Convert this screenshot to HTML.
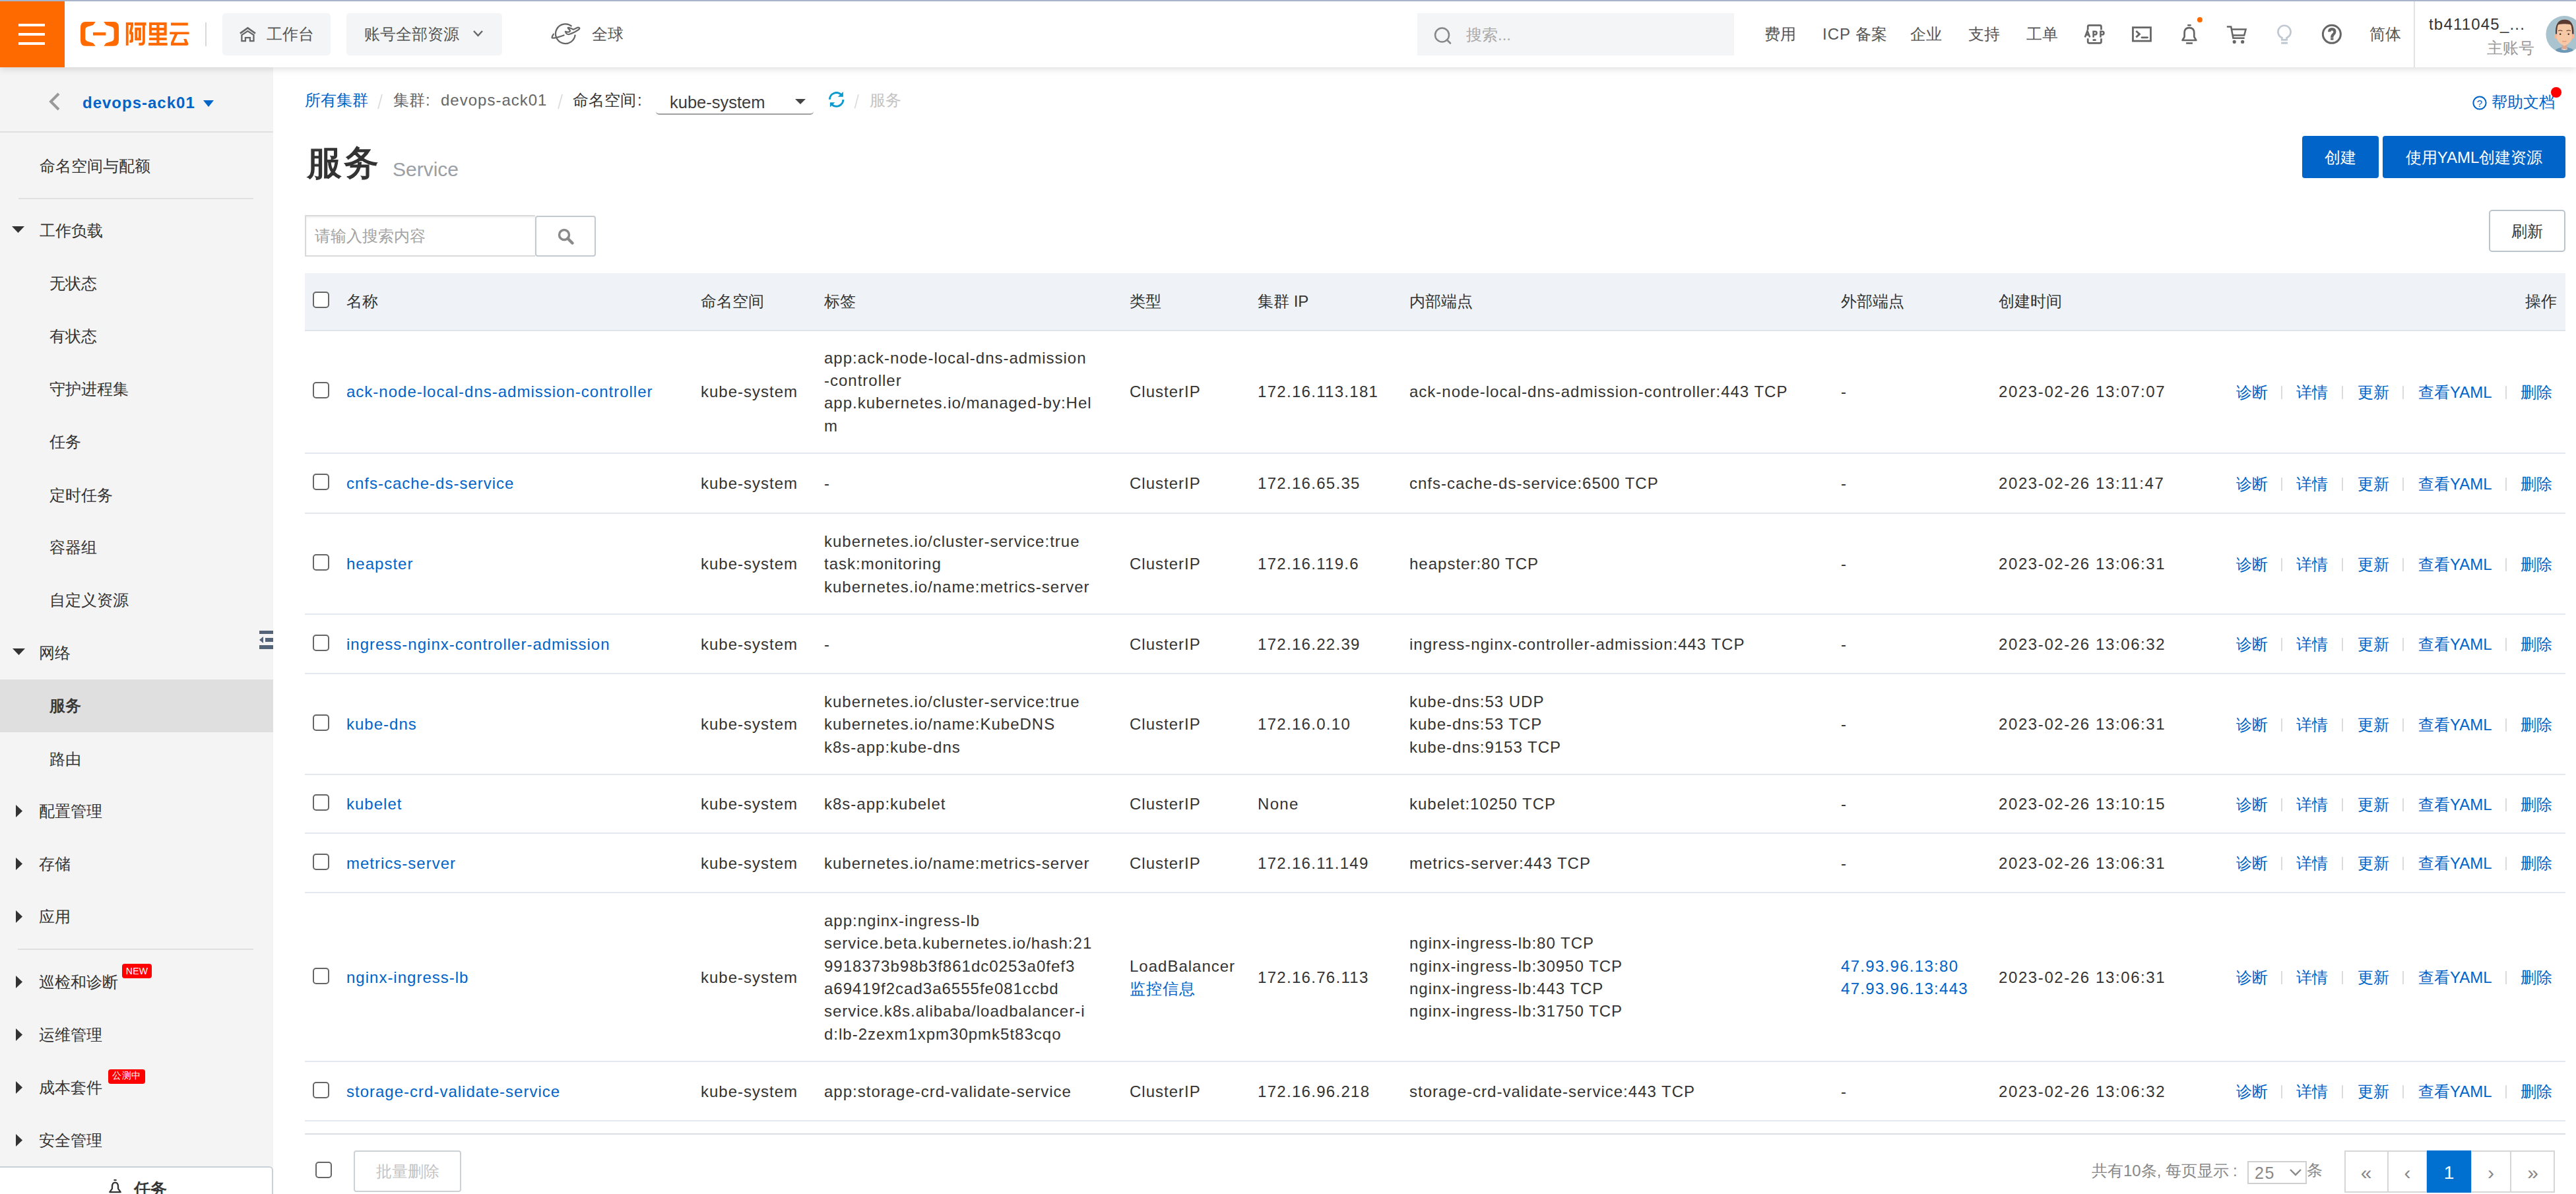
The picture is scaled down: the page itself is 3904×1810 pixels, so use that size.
<!DOCTYPE html><html><head><meta charset="utf-8"><style>
*{box-sizing:border-box}
html,body{margin:0;padding:0}
body{width:3904px;height:1810px;overflow:hidden;position:relative;background:#fff;font-family:"Liberation Sans",sans-serif;font-size:24px;color:#333}
.ab{position:absolute}
.t{position:absolute;white-space:nowrap;line-height:34px;height:34px}
.l{letter-spacing:1px}
.n{letter-spacing:1.3px}
.d{letter-spacing:1.6px}
.lk{color:#0064c8}
.cb{position:absolute;width:25px;height:25px;border:2px solid #666;border-radius:5px;background:#fff}
.sep{position:absolute;width:2px;height:20px;background:#dcdcdc}
svg{position:absolute;overflow:visible}
</style></head><body><div class="ab" style="left:0px;top:102px;width:414px;height:1708px;background:#f4f4f4"></div>
<svg style="left:72px;top:140px" width="22" height="28" viewBox="0 0 22 28"><path d="M17 2 L5 14 L17 26" fill="none" stroke="#999" stroke-width="4"/></svg>
<div class="t " style="left:125px;top:139px;font-weight:bold;color:#0064c8;letter-spacing:1px">devops-ack01</div>
<svg style="left:308px;top:152px" width="16" height="10" viewBox="0 0 16 10"><path d="M0 0 L16 0 L8 10 Z" fill="#0064c8"/></svg>
<div class="ab" style="left:0px;top:199px;width:414px;height:2px;background:#e0e0e0"></div>
<div class="t " style="left:60px;top:235px;">命名空间与配额</div>
<div class="ab" style="left:28px;top:300px;width:356px;height:2px;background:#e0e0e0"></div>
<svg style="left:18px;top:343px" width="19" height="10" viewBox="0 0 19 10"><path d="M0 0 L19 0 L9.5 10 Z" fill="#333"/></svg>
<div class="t " style="left:60px;top:333px;">工作负载</div>
<div class="t " style="left:75px;top:413px;">无状态</div>
<div class="t " style="left:75px;top:493px;">有状态</div>
<div class="t " style="left:75px;top:573px;">守护进程集</div>
<div class="t " style="left:75px;top:653px;">任务</div>
<div class="t " style="left:75px;top:734px;">定时任务</div>
<div class="t " style="left:75px;top:813px;">容器组</div>
<div class="t " style="left:75px;top:893px;">自定义资源</div>
<svg style="left:19px;top:983px" width="19" height="10" viewBox="0 0 19 10"><path d="M0 0 L19 0 L9.5 10 Z" fill="#333"/></svg>
<div class="t " style="left:59px;top:973px;">网络</div>
<div class="ab" style="left:0px;top:1030px;width:414px;height:80px;background:#dfdfdf"></div>
<div class="t " style="left:75px;top:1053px;-webkit-text-stroke:0.7px #333">服务</div>
<div class="t " style="left:75px;top:1134px;">路由</div>
<svg style="left:24px;top:1220px" width="10" height="19" viewBox="0 0 10 19"><path d="M0 0 L10 9.5 L0 19 Z" fill="#333"/></svg>
<div class="t " style="left:59px;top:1213px;">配置管理</div>
<svg style="left:24px;top:1300px" width="10" height="19" viewBox="0 0 10 19"><path d="M0 0 L10 9.5 L0 19 Z" fill="#333"/></svg>
<div class="t " style="left:59px;top:1293px;">存储</div>
<svg style="left:24px;top:1380px" width="10" height="19" viewBox="0 0 10 19"><path d="M0 0 L10 9.5 L0 19 Z" fill="#333"/></svg>
<div class="t " style="left:59px;top:1373px;">应用</div>
<div class="ab" style="left:27px;top:1438px;width:357px;height:2px;background:#e0e0e0"></div>
<svg style="left:24px;top:1479px" width="10" height="19" viewBox="0 0 10 19"><path d="M0 0 L10 9.5 L0 19 Z" fill="#333"/></svg>
<div class="t " style="left:59px;top:1472px;">巡检和诊断</div>
<svg style="left:24px;top:1558.5px" width="10" height="19" viewBox="0 0 10 19"><path d="M0 0 L10 9.5 L0 19 Z" fill="#333"/></svg>
<div class="t " style="left:59px;top:1551.5px;">运维管理</div>
<svg style="left:24px;top:1638.5px" width="10" height="19" viewBox="0 0 10 19"><path d="M0 0 L10 9.5 L0 19 Z" fill="#333"/></svg>
<div class="t " style="left:59px;top:1631.5px;">成本套件</div>
<svg style="left:24px;top:1719px" width="10" height="19" viewBox="0 0 10 19"><path d="M0 0 L10 9.5 L0 19 Z" fill="#333"/></svg>
<div class="t " style="left:59px;top:1712px;">安全管理</div>
<div class="ab" style="left:185px;top:1461px;width:45px;height:22px;background:#f00;border-radius:4px"></div>
<div class="ab" style="left:185px;top:1461px;width:45px;height:22px;line-height:22px;text-align:center;color:#fff;font-size:14px;letter-spacing:0.3px">NEW</div>
<div class="ab" style="left:164px;top:1621px;width:56px;height:22px;background:#f00;border-radius:4px"></div>
<div class="ab" style="left:164px;top:1620px;width:56px;height:22px;line-height:22px;text-align:center;color:#fff;font-size:13.5px;letter-spacing:0.5px">公测中</div>
<svg style="left:393px;top:956px" width="21" height="28" viewBox="0 0 21 28"><rect x="0" y="0" width="21" height="5" fill="#546478"/><rect x="9" y="11" width="12" height="6" fill="#546478"/><rect x="0" y="22" width="21" height="6" fill="#546478"/><path d="M6 9 L6 19 L0 14 Z" fill="#546478"/></svg>
<div class="ab" style="left:0px;top:1768px;width:414px;height:62px;background:#fff;border-top:2px solid #c9d0d8;border-right:2px solid #c9d0d8;border-top-right-radius:6px"></div>
<svg style="left:0px;top:1680px" width="450" height="130" viewBox="0 0 2576 744" preserveAspectRatio="none"><rect x="987" y="617" width="24" height="12" fill="#333"/><path d="M952,728 L973,698 L973,682 Q973,645 999,645 Q1025,645 1025,682 L1025,698 L1046,728 Z" fill="none" stroke="#333" stroke-width="13" stroke-linejoin="round"/></svg>
<div class="t " style="left:203px;top:1785px;-webkit-text-stroke:0.8px #333;font-size:25px">任务</div>
<div class="t " style="left:462px;top:135px;color:#0064c8">所有集群</div>
<svg style="left:570px;top:140px" width="12" height="28" viewBox="0 0 12 28"><path d="M3 25 L9 3" stroke="#dcdcdc" stroke-width="1.8"/></svg>
<div class="t " style="left:596px;top:135px;color:#666">集群</div>
<div class="t " style="left:645px;top:135px;color:#666">:</div>
<div class="t " style="left:668px;top:135px;color:#666;letter-spacing:1px">devops-ack01</div>
<svg style="left:843px;top:140px" width="12" height="28" viewBox="0 0 12 28"><path d="M3 25 L9 3" stroke="#dcdcdc" stroke-width="1.8"/></svg>
<div class="t " style="left:868px;top:135px;color:#333">命名空间</div>
<div class="t " style="left:966px;top:135px;color:#333">:</div>
<div class="ab" style="left:994px;top:120px;width:239px;height:54px;border-bottom:2px solid #a0a0a0;border-radius:0 0 5px 5px"></div>
<div class="t " style="left:1015px;top:138px;font-size:25.5px;color:#3c3c3c">kube-system</div>
<svg style="left:1205px;top:150px" width="16" height="8" viewBox="0 0 16 8"><path d="M0 0 L16 0 L8 8 Z" fill="#444"/></svg>
<svg style="left:1245px;top:130px" width="130" height="45" viewBox="0 0 2576 892" preserveAspectRatio="none"><path d="M245,410 A205,205 0 0 1 585,262" fill="none" stroke="#0a9ad0" stroke-width="58"/><path d="M490,332 L652,180 L652,332 Z" fill="#0a9ad0"/><path d="M652,418 A205,205 0 0 1 312,568" fill="none" stroke="#0a9ad0" stroke-width="58"/><path d="M255,500 L405,500 L255,645 Z" fill="#0a9ad0"/><path d="M1000,680 L1110,262" stroke="#dcdcdc" stroke-width="34"/></svg>
<div class="t " style="left:1318px;top:135px;color:#c4c4c4">服务</div>
<svg style="left:3747px;top:145px" width="22" height="22" viewBox="0 0 22 22"><circle cx="11" cy="11" r="9.6" fill="none" stroke="#0064c8" stroke-width="2"/><text x="11" y="17" text-anchor="middle" font-size="15" fill="#0064c8" font-family="Liberation Sans">?</text></svg>
<div class="t " style="left:3776px;top:138px;color:#0064c8">帮助文档</div>
<div class="ab" style="left:3866px;top:132px;width:16px;height:16px;background:#f00;border-radius:50%"></div>
<div class="ab" style="left:465px;top:215px;line-height:64px;font-size:53px;letter-spacing:3px;-webkit-text-stroke:1.4px #333;color:#333;white-space:nowrap">服务</div>
<div class="ab" style="left:595px;top:238px;line-height:38px;font-size:30px;color:#9aa0a6;white-space:nowrap">Service</div>
<div class="ab" style="left:3489px;top:206px;width:116px;height:64px;background:#0064c8;border-radius:4px"></div>
<div class="t " style="left:3247px;width:600px;text-align:center;top:222px;color:#fff">创建</div>
<div class="ab" style="left:3611px;top:206px;width:277px;height:64px;background:#0064c8;border-radius:4px"></div>
<div class="t " style="left:3449.5px;width:600px;text-align:center;top:222px;color:#fff">使用YAML创建资源</div>
<div class="ab" style="left:462px;top:326px;width:349px;height:63px;border:2px solid #dadada;border-right:none;box-shadow:inset 0 2px 3px rgba(0,0,0,0.06)"></div>
<div class="t " style="left:477px;top:341px;color:#a3a3a3">请输入搜索内容</div>
<div class="ab" style="left:811px;top:327px;width:92px;height:62px;border:2px solid #c3cad2;border-radius:4px"></div>
<svg style="left:845px;top:346px" width="25" height="25" viewBox="0 0 25 25"><circle cx="10" cy="10" r="7.5" fill="none" stroke="#8a8a8a" stroke-width="3.5"/><path d="M15.5 15.5 L22.5 22.5" stroke="#8a8a8a" stroke-width="4.5" stroke-linecap="round"/></svg>
<div class="ab" style="left:3772px;top:318px;width:116px;height:64px;border:2px solid #bcc3cb;border-radius:5px"></div>
<div class="t " style="left:3530px;width:600px;text-align:center;top:334px;">刷新</div>
<div class="ab" style="left:462px;top:414px;width:3426px;height:86px;background:#eff3f8"></div>
<div class="ab" style="left:462px;top:500px;width:3426px;height:2px;background:#dfe4ea"></div>
<div class="cb" style="left:474px;top:442px"></div>
<div class="t " style="left:525px;top:440px;">名称</div>
<div class="t " style="left:1062px;top:440px;">命名空间</div>
<div class="t " style="left:1249px;top:440px;">标签</div>
<div class="t " style="left:1712px;top:440px;">类型</div>
<div class="t " style="left:1906px;top:440px;">集群 IP</div>
<div class="t " style="left:2136px;top:440px;">内部端点</div>
<div class="t " style="left:2790px;top:440px;">外部端点</div>
<div class="t " style="left:3029px;top:440px;">创建时间</div>
<div class="t " style="right:29px;top:440px;">操作</div>
<div class="cb" style="left:474px;top:579.0px"></div>
<div class="ab l" style="left:525px;top:577.4px;line-height:34.3px;white-space:nowrap"><span class="lk">ack-node-local-dns-admission-controller</span></div>
<div class="ab l" style="left:1062px;top:577.4px;line-height:34.3px;white-space:nowrap">kube-system</div>
<div class="ab l" style="left:1249px;top:525.9px;line-height:34.3px;white-space:nowrap">app:ack-node-local-dns-admission<br>-controller<br>app.kubernetes.io/managed-by:Hel<br>m</div>
<div class="ab l" style="left:1712px;top:577.4px;line-height:34.3px;white-space:nowrap">ClusterIP</div>
<div class="ab n" style="left:1906px;top:577.4px;line-height:34.3px;white-space:nowrap">172.16.113.181</div>
<div class="ab l" style="left:2136px;top:577.4px;line-height:34.3px;white-space:nowrap">ack-node-local-dns-admission-controller:443 TCP</div>
<div class="ab l" style="left:2790px;top:577.4px;line-height:34.3px;white-space:nowrap">-</div>
<div class="ab d" style="left:3029px;top:577.4px;line-height:34.3px;white-space:nowrap">2023-02-26 13:07:07</div>
<div class="t " style="left:3389px;top:577.5px;color:#0064c8">诊断</div>
<div class="t " style="left:3480px;top:577.5px;color:#0064c8">详情</div>
<div class="t " style="left:3573px;top:577.5px;color:#0064c8">更新</div>
<div class="t " style="left:3665px;top:577.5px;color:#0064c8">查看YAML</div>
<div class="t " style="left:3820px;top:577.5px;color:#0064c8">删除</div>
<div class="sep" style="left:3457px;top:584.5px"></div>
<div class="sep" style="left:3549px;top:584.5px"></div>
<div class="sep" style="left:3641px;top:584.5px"></div>
<div class="sep" style="left:3797px;top:584.5px"></div>
<div class="ab" style="left:462px;top:686px;width:3426px;height:2px;background:#e3e8ee"></div>
<div class="cb" style="left:474px;top:718.0px"></div>
<div class="ab l" style="left:525px;top:716.4px;line-height:34.3px;white-space:nowrap"><span class="lk">cnfs-cache-ds-service</span></div>
<div class="ab l" style="left:1062px;top:716.4px;line-height:34.3px;white-space:nowrap">kube-system</div>
<div class="ab l" style="left:1249px;top:716.4px;line-height:34.3px;white-space:nowrap">-</div>
<div class="ab l" style="left:1712px;top:716.4px;line-height:34.3px;white-space:nowrap">ClusterIP</div>
<div class="ab n" style="left:1906px;top:716.4px;line-height:34.3px;white-space:nowrap">172.16.65.35</div>
<div class="ab l" style="left:2136px;top:716.4px;line-height:34.3px;white-space:nowrap">cnfs-cache-ds-service:6500 TCP</div>
<div class="ab l" style="left:2790px;top:716.4px;line-height:34.3px;white-space:nowrap">-</div>
<div class="ab d" style="left:3029px;top:716.4px;line-height:34.3px;white-space:nowrap">2023-02-26 13:11:47</div>
<div class="t " style="left:3389px;top:716.5px;color:#0064c8">诊断</div>
<div class="t " style="left:3480px;top:716.5px;color:#0064c8">详情</div>
<div class="t " style="left:3573px;top:716.5px;color:#0064c8">更新</div>
<div class="t " style="left:3665px;top:716.5px;color:#0064c8">查看YAML</div>
<div class="t " style="left:3820px;top:716.5px;color:#0064c8">删除</div>
<div class="sep" style="left:3457px;top:723.5px"></div>
<div class="sep" style="left:3549px;top:723.5px"></div>
<div class="sep" style="left:3641px;top:723.5px"></div>
<div class="sep" style="left:3797px;top:723.5px"></div>
<div class="ab" style="left:462px;top:777px;width:3426px;height:2px;background:#e3e8ee"></div>
<div class="cb" style="left:474px;top:840.0px"></div>
<div class="ab l" style="left:525px;top:838.4px;line-height:34.3px;white-space:nowrap"><span class="lk">heapster</span></div>
<div class="ab l" style="left:1062px;top:838.4px;line-height:34.3px;white-space:nowrap">kube-system</div>
<div class="ab l" style="left:1249px;top:804.0px;line-height:34.3px;white-space:nowrap">kubernetes.io/cluster-service:true<br>task:monitoring<br>kubernetes.io/name:metrics-server</div>
<div class="ab l" style="left:1712px;top:838.4px;line-height:34.3px;white-space:nowrap">ClusterIP</div>
<div class="ab n" style="left:1906px;top:838.4px;line-height:34.3px;white-space:nowrap">172.16.119.6</div>
<div class="ab l" style="left:2136px;top:838.4px;line-height:34.3px;white-space:nowrap">heapster:80 TCP</div>
<div class="ab l" style="left:2790px;top:838.4px;line-height:34.3px;white-space:nowrap">-</div>
<div class="ab d" style="left:3029px;top:838.4px;line-height:34.3px;white-space:nowrap">2023-02-26 13:06:31</div>
<div class="t " style="left:3389px;top:838.5px;color:#0064c8">诊断</div>
<div class="t " style="left:3480px;top:838.5px;color:#0064c8">详情</div>
<div class="t " style="left:3573px;top:838.5px;color:#0064c8">更新</div>
<div class="t " style="left:3665px;top:838.5px;color:#0064c8">查看YAML</div>
<div class="t " style="left:3820px;top:838.5px;color:#0064c8">删除</div>
<div class="sep" style="left:3457px;top:845.5px"></div>
<div class="sep" style="left:3549px;top:845.5px"></div>
<div class="sep" style="left:3641px;top:845.5px"></div>
<div class="sep" style="left:3797px;top:845.5px"></div>
<div class="ab" style="left:462px;top:930px;width:3426px;height:2px;background:#e3e8ee"></div>
<div class="cb" style="left:474px;top:961.5px"></div>
<div class="ab l" style="left:525px;top:959.9px;line-height:34.3px;white-space:nowrap"><span class="lk">ingress-nginx-controller-admission</span></div>
<div class="ab l" style="left:1062px;top:959.9px;line-height:34.3px;white-space:nowrap">kube-system</div>
<div class="ab l" style="left:1249px;top:959.9px;line-height:34.3px;white-space:nowrap">-</div>
<div class="ab l" style="left:1712px;top:959.9px;line-height:34.3px;white-space:nowrap">ClusterIP</div>
<div class="ab n" style="left:1906px;top:959.9px;line-height:34.3px;white-space:nowrap">172.16.22.39</div>
<div class="ab l" style="left:2136px;top:959.9px;line-height:34.3px;white-space:nowrap">ingress-nginx-controller-admission:443 TCP</div>
<div class="ab l" style="left:2790px;top:959.9px;line-height:34.3px;white-space:nowrap">-</div>
<div class="ab d" style="left:3029px;top:959.9px;line-height:34.3px;white-space:nowrap">2023-02-26 13:06:32</div>
<div class="t " style="left:3389px;top:960.0px;color:#0064c8">诊断</div>
<div class="t " style="left:3480px;top:960.0px;color:#0064c8">详情</div>
<div class="t " style="left:3573px;top:960.0px;color:#0064c8">更新</div>
<div class="t " style="left:3665px;top:960.0px;color:#0064c8">查看YAML</div>
<div class="t " style="left:3820px;top:960.0px;color:#0064c8">删除</div>
<div class="sep" style="left:3457px;top:967.0px"></div>
<div class="sep" style="left:3549px;top:967.0px"></div>
<div class="sep" style="left:3641px;top:967.0px"></div>
<div class="sep" style="left:3797px;top:967.0px"></div>
<div class="ab" style="left:462px;top:1020px;width:3426px;height:2px;background:#e3e8ee"></div>
<div class="cb" style="left:474px;top:1083.0px"></div>
<div class="ab l" style="left:525px;top:1081.3px;line-height:34.3px;white-space:nowrap"><span class="lk">kube-dns</span></div>
<div class="ab l" style="left:1062px;top:1081.3px;line-height:34.3px;white-space:nowrap">kube-system</div>
<div class="ab l" style="left:1249px;top:1047.0px;line-height:34.3px;white-space:nowrap">kubernetes.io/cluster-service:true<br>kubernetes.io/name:KubeDNS<br>k8s-app:kube-dns</div>
<div class="ab l" style="left:1712px;top:1081.3px;line-height:34.3px;white-space:nowrap">ClusterIP</div>
<div class="ab n" style="left:1906px;top:1081.3px;line-height:34.3px;white-space:nowrap">172.16.0.10</div>
<div class="ab l" style="left:2136px;top:1047.0px;line-height:34.3px;white-space:nowrap">kube-dns:53 UDP<br>kube-dns:53 TCP<br>kube-dns:9153 TCP</div>
<div class="ab l" style="left:2790px;top:1081.3px;line-height:34.3px;white-space:nowrap">-</div>
<div class="ab d" style="left:3029px;top:1081.3px;line-height:34.3px;white-space:nowrap">2023-02-26 13:06:31</div>
<div class="t " style="left:3389px;top:1081.5px;color:#0064c8">诊断</div>
<div class="t " style="left:3480px;top:1081.5px;color:#0064c8">详情</div>
<div class="t " style="left:3573px;top:1081.5px;color:#0064c8">更新</div>
<div class="t " style="left:3665px;top:1081.5px;color:#0064c8">查看YAML</div>
<div class="t " style="left:3820px;top:1081.5px;color:#0064c8">删除</div>
<div class="sep" style="left:3457px;top:1088.5px"></div>
<div class="sep" style="left:3549px;top:1088.5px"></div>
<div class="sep" style="left:3641px;top:1088.5px"></div>
<div class="sep" style="left:3797px;top:1088.5px"></div>
<div class="ab" style="left:462px;top:1173px;width:3426px;height:2px;background:#e3e8ee"></div>
<div class="cb" style="left:474px;top:1204.0px"></div>
<div class="ab l" style="left:525px;top:1202.3px;line-height:34.3px;white-space:nowrap"><span class="lk">kubelet</span></div>
<div class="ab l" style="left:1062px;top:1202.3px;line-height:34.3px;white-space:nowrap">kube-system</div>
<div class="ab l" style="left:1249px;top:1202.3px;line-height:34.3px;white-space:nowrap">k8s-app:kubelet</div>
<div class="ab l" style="left:1712px;top:1202.3px;line-height:34.3px;white-space:nowrap">ClusterIP</div>
<div class="ab n" style="left:1906px;top:1202.3px;line-height:34.3px;white-space:nowrap">None</div>
<div class="ab l" style="left:2136px;top:1202.3px;line-height:34.3px;white-space:nowrap">kubelet:10250 TCP</div>
<div class="ab l" style="left:2790px;top:1202.3px;line-height:34.3px;white-space:nowrap">-</div>
<div class="ab d" style="left:3029px;top:1202.3px;line-height:34.3px;white-space:nowrap">2023-02-26 13:10:15</div>
<div class="t " style="left:3389px;top:1202.5px;color:#0064c8">诊断</div>
<div class="t " style="left:3480px;top:1202.5px;color:#0064c8">详情</div>
<div class="t " style="left:3573px;top:1202.5px;color:#0064c8">更新</div>
<div class="t " style="left:3665px;top:1202.5px;color:#0064c8">查看YAML</div>
<div class="t " style="left:3820px;top:1202.5px;color:#0064c8">删除</div>
<div class="sep" style="left:3457px;top:1209.5px"></div>
<div class="sep" style="left:3549px;top:1209.5px"></div>
<div class="sep" style="left:3641px;top:1209.5px"></div>
<div class="sep" style="left:3797px;top:1209.5px"></div>
<div class="ab" style="left:462px;top:1262px;width:3426px;height:2px;background:#e3e8ee"></div>
<div class="cb" style="left:474px;top:1293.5px"></div>
<div class="ab l" style="left:525px;top:1291.8px;line-height:34.3px;white-space:nowrap"><span class="lk">metrics-server</span></div>
<div class="ab l" style="left:1062px;top:1291.8px;line-height:34.3px;white-space:nowrap">kube-system</div>
<div class="ab l" style="left:1249px;top:1291.8px;line-height:34.3px;white-space:nowrap">kubernetes.io/name:metrics-server</div>
<div class="ab l" style="left:1712px;top:1291.8px;line-height:34.3px;white-space:nowrap">ClusterIP</div>
<div class="ab n" style="left:1906px;top:1291.8px;line-height:34.3px;white-space:nowrap">172.16.11.149</div>
<div class="ab l" style="left:2136px;top:1291.8px;line-height:34.3px;white-space:nowrap">metrics-server:443 TCP</div>
<div class="ab l" style="left:2790px;top:1291.8px;line-height:34.3px;white-space:nowrap">-</div>
<div class="ab d" style="left:3029px;top:1291.8px;line-height:34.3px;white-space:nowrap">2023-02-26 13:06:31</div>
<div class="t " style="left:3389px;top:1292.0px;color:#0064c8">诊断</div>
<div class="t " style="left:3480px;top:1292.0px;color:#0064c8">详情</div>
<div class="t " style="left:3573px;top:1292.0px;color:#0064c8">更新</div>
<div class="t " style="left:3665px;top:1292.0px;color:#0064c8">查看YAML</div>
<div class="t " style="left:3820px;top:1292.0px;color:#0064c8">删除</div>
<div class="sep" style="left:3457px;top:1299.0px"></div>
<div class="sep" style="left:3549px;top:1299.0px"></div>
<div class="sep" style="left:3641px;top:1299.0px"></div>
<div class="sep" style="left:3797px;top:1299.0px"></div>
<div class="ab" style="left:462px;top:1352px;width:3426px;height:2px;background:#e3e8ee"></div>
<div class="cb" style="left:474px;top:1466.5px"></div>
<div class="ab l" style="left:525px;top:1464.8px;line-height:34.3px;white-space:nowrap"><span class="lk">nginx-ingress-lb</span></div>
<div class="ab l" style="left:1062px;top:1464.8px;line-height:34.3px;white-space:nowrap">kube-system</div>
<div class="ab l" style="left:1249px;top:1379.1px;line-height:34.3px;white-space:nowrap">app:nginx-ingress-lb<br>service.beta.kubernetes.io/hash:21<br>9918373b98b3f861dc0253a0fef3<br>a69419f2cad3a6555fe081ccbd<br>service.k8s.alibaba/loadbalancer-i<br>d:lb-2zexm1xpm30pmk5t83cqo</div>
<div class="ab l" style="left:1712px;top:1447.7px;line-height:34.3px;white-space:nowrap">LoadBalancer<br><span class="lk">监控信息</span></div>
<div class="ab n" style="left:1906px;top:1464.8px;line-height:34.3px;white-space:nowrap">172.16.76.113</div>
<div class="ab l" style="left:2136px;top:1413.4px;line-height:34.3px;white-space:nowrap">nginx-ingress-lb:80 TCP<br>nginx-ingress-lb:30950 TCP<br>nginx-ingress-lb:443 TCP<br>nginx-ingress-lb:31750 TCP</div>
<div class="ab l" style="left:2790px;top:1447.7px;line-height:34.3px;white-space:nowrap"><span class="lk n">47.93.96.13:80</span><br><span class="lk n">47.93.96.13:443</span></div>
<div class="ab d" style="left:3029px;top:1464.8px;line-height:34.3px;white-space:nowrap">2023-02-26 13:06:31</div>
<div class="t " style="left:3389px;top:1465.0px;color:#0064c8">诊断</div>
<div class="t " style="left:3480px;top:1465.0px;color:#0064c8">详情</div>
<div class="t " style="left:3573px;top:1465.0px;color:#0064c8">更新</div>
<div class="t " style="left:3665px;top:1465.0px;color:#0064c8">查看YAML</div>
<div class="t " style="left:3820px;top:1465.0px;color:#0064c8">删除</div>
<div class="sep" style="left:3457px;top:1472.0px"></div>
<div class="sep" style="left:3549px;top:1472.0px"></div>
<div class="sep" style="left:3641px;top:1472.0px"></div>
<div class="sep" style="left:3797px;top:1472.0px"></div>
<div class="ab" style="left:462px;top:1608px;width:3426px;height:2px;background:#e3e8ee"></div>
<div class="cb" style="left:474px;top:1639.5px"></div>
<div class="ab l" style="left:525px;top:1637.8px;line-height:34.3px;white-space:nowrap"><span class="lk">storage-crd-validate-service</span></div>
<div class="ab l" style="left:1062px;top:1637.8px;line-height:34.3px;white-space:nowrap">kube-system</div>
<div class="ab l" style="left:1249px;top:1637.8px;line-height:34.3px;white-space:nowrap">app:storage-crd-validate-service</div>
<div class="ab l" style="left:1712px;top:1637.8px;line-height:34.3px;white-space:nowrap">ClusterIP</div>
<div class="ab n" style="left:1906px;top:1637.8px;line-height:34.3px;white-space:nowrap">172.16.96.218</div>
<div class="ab l" style="left:2136px;top:1637.8px;line-height:34.3px;white-space:nowrap">storage-crd-validate-service:443 TCP</div>
<div class="ab l" style="left:2790px;top:1637.8px;line-height:34.3px;white-space:nowrap">-</div>
<div class="ab d" style="left:3029px;top:1637.8px;line-height:34.3px;white-space:nowrap">2023-02-26 13:06:32</div>
<div class="t " style="left:3389px;top:1638.0px;color:#0064c8">诊断</div>
<div class="t " style="left:3480px;top:1638.0px;color:#0064c8">详情</div>
<div class="t " style="left:3573px;top:1638.0px;color:#0064c8">更新</div>
<div class="t " style="left:3665px;top:1638.0px;color:#0064c8">查看YAML</div>
<div class="t " style="left:3820px;top:1638.0px;color:#0064c8">删除</div>
<div class="sep" style="left:3457px;top:1645.0px"></div>
<div class="sep" style="left:3549px;top:1645.0px"></div>
<div class="sep" style="left:3641px;top:1645.0px"></div>
<div class="sep" style="left:3797px;top:1645.0px"></div>
<div class="ab" style="left:462px;top:1698px;width:3426px;height:2px;background:#e3e8ee"></div>
<div class="ab" style="left:462px;top:1718px;width:3426px;height:2px;background:#dcdfe3"></div>
<div class="cb" style="left:478px;top:1761px"></div>
<div class="ab" style="left:536px;top:1744px;width:163px;height:63px;border:2px solid #ccd1d6;border-radius:4px"></div>
<div class="t " style="left:317.5px;width:600px;text-align:center;top:1759px;color:#c4c4c4">批量删除</div>
<div class="t " style="left:3170px;top:1758px;color:#888">共有10条, 每页显示</div>
<div class="t " style="left:3384px;top:1758px;color:#888">:</div>
<div class="ab" style="left:3406px;top:1760px;width:90px;height:35px;border:2px solid #d0d0d0"></div>
<div class="t " style="left:3417px;top:1761px;color:#888;font-size:25px;letter-spacing:1.5px">25</div>
<svg style="left:3470px;top:1772px" width="18" height="10" viewBox="0 0 18 10"><path d="M1 1 L9 9 L17 1" fill="none" stroke="#888" stroke-width="2.4"/></svg>
<div class="t " style="left:3496px;top:1757px;color:#888">条</div>
<div class="ab" style="left:3553px;top:1744px;width:319px;height:64px;border:2px solid #d6d6d6"></div>
<div class="ab" style="left:3618px;top:1744px;width:2px;height:64px;background:#d6d6d6"></div>
<div class="ab" style="left:3677px;top:1744px;width:2px;height:64px;background:#d6d6d6"></div>
<div class="ab" style="left:3744px;top:1744px;width:2px;height:64px;background:#d6d6d6"></div>
<div class="ab" style="left:3804px;top:1744px;width:2px;height:64px;background:#d6d6d6"></div>
<div class="ab" style="left:3678px;top:1744px;width:67px;height:64px;background:#0070d0"></div>
<div class="t " style="left:3286px;width:600px;text-align:center;top:1761px;color:#888;font-size:30px">«</div>
<div class="t " style="left:3348.5px;width:600px;text-align:center;top:1761px;color:#888;font-size:30px">‹</div>
<div class="t " style="left:3411.5px;width:600px;text-align:center;top:1761px;color:#fff;font-size:28px">1</div>
<div class="t " style="left:3475px;width:600px;text-align:center;top:1761px;color:#888;font-size:30px">›</div>
<div class="t " style="left:3538.5px;width:600px;text-align:center;top:1761px;color:#888;font-size:30px">»</div>
<div class="ab" style="left:0px;top:2px;width:3904px;height:100px;background:#fff;box-shadow:0 3px 10px rgba(0,0,0,0.13)"></div>
<div class="ab" style="left:0px;top:0px;width:3904px;height:2px;background:#a7b4cb"></div>
<div class="ab" style="left:0px;top:2px;width:98px;height:100px;background:#ff6a00"></div>
<div class="ab" style="left:28px;top:36px;width:40px;height:4px;background:#fff"></div>
<div class="ab" style="left:28px;top:50px;width:40px;height:4px;background:#fff"></div>
<div class="ab" style="left:28px;top:64px;width:40px;height:4px;background:#fff"></div>
<svg style="left:115px;top:25px" width="180" height="55" viewBox="0 0 2576 787" preserveAspectRatio="none"><path d="M425,115 L210,115 Q100,115 100,240 L100,515 Q100,640 210,640 L425,640 L375,575 L245,535 Q205,520 205,470 L205,290 Q205,240 245,225 L375,185 Z" fill="#ff6a00"/><path d="M605,115 L820,115 Q930,115 930,240 L930,515 Q930,640 820,640 L605,640 L655,575 L785,535 Q825,520 825,470 L825,290 Q825,240 785,225 L655,185 Z" fill="#ff6a00"/><rect x="372" y="345" width="278" height="65" fill="#ff6a00"/><path d="M1085,130 L1245,130 L1245,200 L1215,330 L1245,345 L1245,530 Q1240,570 1190,570 L1165,570 L1165,515 Q1190,515 1190,495 L1190,395 L1160,380 L1160,330 L1190,185 L1140,185 L1140,630 L1085,630 Z" fill="#ff6a00"/><rect x="1270" y="130" width="255" height="65" fill="#ff6a00"/><path d="M1445,190 L1500,190 L1500,540 Q1500,630 1420,630 L1365,630 L1365,570 L1420,570 Q1445,570 1445,540 Z" fill="#ff6a00"/><path d="M1278,240 L1415,240 L1415,520 L1278,520 Z M1335,300 L1335,460 L1360,460 L1360,300 Z" fill="#ff6a00" fill-rule="evenodd"/><path d="M1590,130 L1970,130 L1970,410 L1590,410 Z M1645,185 L1645,245 L1750,245 L1750,185 Z M1810,185 L1810,245 L1910,245 L1910,185 Z M1645,300 L1645,350 L1750,350 L1750,300 Z M1810,300 L1810,350 L1910,350 L1910,300 Z" fill="#ff6a00" fill-rule="evenodd"/><rect x="1750" y="400" width="60" height="180" fill="#ff6a00"/><rect x="1590" y="460" width="380" height="55" fill="#ff6a00"/><rect x="1575" y="570" width="410" height="60" fill="#ff6a00"/><rect x="2060" y="135" width="370" height="60" fill="#ff6a00"/><rect x="2035" y="335" width="420" height="52" fill="#ff6a00"/><path d="M2140,385 L2205,385 L2120,570 L2365,570 L2335,485 L2395,485 L2440,590 Q2440,630 2400,630 L2060,630 L2060,570 Z" fill="#ff6a00"/></svg>
<div class="ab" style="left:311px;top:34px;width:2px;height:36px;background:#d9d9d9"></div>
<div class="ab" style="left:337px;top:20px;width:164px;height:64px;background:#f4f5f7;border-radius:5px"></div>
<svg style="left:355px;top:30px" width="45" height="40" viewBox="0 0 1343 1194" preserveAspectRatio="none"><path d="M265,615 L610,370 L955,615" fill="none" stroke="#666" stroke-width="75"/><path d="M340,960 L340,690 L610,510 L880,690 L880,960 L715,960 L715,810 L505,810 L505,960 Z" fill="none" stroke="#666" stroke-width="68"/></svg>
<div class="t " style="left:404px;top:35px;color:#555">工作台</div>
<div class="ab" style="left:525px;top:20px;width:236px;height:64px;background:#f4f5f7;border-radius:5px"></div>
<div class="t " style="left:552px;top:35px;color:#555">账号全部资源</div>
<svg style="left:717px;top:46px" width="15" height="9" viewBox="0 0 15 9"><path d="M1 1 L7.5 8 L14 1" fill="none" stroke="#666" stroke-width="2.4"/></svg>
<svg style="left:825px;top:25px" width="70" height="50" viewBox="0 0 1672 1194" preserveAspectRatio="none"><path d="M990,355 A355,355 0 1 0 1115,660" fill="none" stroke="#666" stroke-width="55"/><path d="M330,640 Q250,760 290,775 Q380,800 705,680" fill="none" stroke="#666" stroke-width="55" stroke-linecap="round"/><path d="M760,545 Q860,580 920,545 Q950,500 880,450 Q820,400 890,405 Q960,420 1050,470 Q1130,440 1200,400 Q1260,390 1275,430 Q1270,470 1100,560 Q960,630 880,650 Q790,650 760,545 Z" fill="none" stroke="#666" stroke-width="52" stroke-linejoin="round"/></svg>
<div class="t " style="left:897px;top:35px;color:#555">全球</div>
<div class="ab" style="left:2148px;top:20px;width:480px;height:64px;background:#f4f5f7"></div>
<svg style="left:2170px;top:38px" width="32" height="32" viewBox="0 0 32 32"><circle cx="15.5" cy="15" r="10.5" fill="none" stroke="#888" stroke-width="2.5"/><path d="M23 22.5 L28 27.5" stroke="#888" stroke-width="2.6" stroke-linecap="round"/></svg>
<div class="t " style="left:2222px;top:36px;color:#aaa">搜索...</div>
<div class="t " style="left:2674px;top:35px;color:#555">费用</div>
<div class="t " style="left:2762px;top:35px;color:#555"><span class="l">ICP</span> 备案</div>
<div class="t " style="left:2895px;top:35px;color:#555">企业</div>
<div class="t " style="left:2983px;top:35px;color:#555">支持</div>
<div class="t " style="left:3071px;top:35px;color:#555">工单</div>
<svg style="left:3150px;top:30px" width="120" height="45" viewBox="0 0 2576 966" preserveAspectRatio="none"><path d="M305,330 L305,225 Q305,180 350,180 L695,180 Q740,180 740,225 L740,330" fill="none" stroke="#666" stroke-width="58"/><path d="M305,605 L305,715 Q305,760 350,760 L695,760 Q740,760 740,715 L740,605" fill="none" stroke="#666" stroke-width="58"/><rect x="460" y="628" width="115" height="60" rx="25" fill="#666"/><path d="M210,570 L290,360 L370,570 M245,490 L335,490" fill="none" stroke="#666" stroke-width="55"/><path d="M485,575 L485,380 L545,380 Q592,380 592,430 Q592,482 545,482 L485,482" fill="none" stroke="#666" stroke-width="55"/><path d="M718,575 L718,380 L778,380 Q825,380 825,430 Q825,482 778,482 L718,482" fill="none" stroke="#666" stroke-width="55"/><rect x="1770" y="250" width="580" height="440" fill="none" stroke="#666" stroke-width="60"/><path d="M1875,365 L1985,465 L1875,570" fill="none" stroke="#666" stroke-width="62"/><path d="M2060,575 L2245,575" stroke="#666" stroke-width="60" stroke-linecap="round"/></svg>
<svg style="left:3295px;top:20px" width="120" height="55" viewBox="0 0 2576 1181" preserveAspectRatio="none"><rect x="435" y="365" width="115" height="55" fill="#666"/><path d="M270,880 L335,770 L335,640 Q335,475 490,475 Q650,475 650,640 L650,770 L715,880 Z" fill="none" stroke="#666" stroke-width="58" stroke-linejoin="round"/><rect x="390" y="950" width="210" height="55" fill="#666"/><circle cx="835" cy="215" r="85" fill="#ff6a00"/><path d="M1715,440 L1850,440 L1920,812 L2290,812" fill="none" stroke="#666" stroke-width="55"/><path d="M1860,525 L2330,525 L2280,718 L1905,718" fill="none" stroke="#666" stroke-width="55"/><circle cx="1958" cy="932" r="55" fill="#666"/><circle cx="2225" cy="932" r="55" fill="#666"/></svg>
<svg style="left:3440px;top:25px" width="120" height="50" viewBox="0 0 2576 1073" preserveAspectRatio="none"><path d="M395,690 A205,205 0 1 1 550,690 L550,760 L395,760 Z" fill="none" stroke="#c0c8d2" stroke-width="58"/><rect x="370" y="830" width="208" height="65" fill="#c0c8d2"/><circle cx="2015" cy="575" r="290" fill="none" stroke="#666" stroke-width="65"/><path d="M1935,500 Q1935,410 2022,410 Q2112,410 2112,495 Q2112,550 2065,585 Q2022,615 2022,690" fill="none" stroke="#666" stroke-width="90"/><rect x="1978" y="700" width="92" height="65" fill="#666"/></svg>
<div class="t " style="left:3591px;top:35px;color:#555">简体</div>
<div class="ab" style="left:3658px;top:2px;width:2px;height:100px;background:#e2e2e2"></div>
<div class="t " style="left:3681px;top:20px;color:#333;letter-spacing:1.2px">tb411045_...</div>
<div class="t " style="left:3769px;top:56px;color:#999">主账号</div>
<svg style="left:3840px;top:15px" width="64" height="75" viewBox="0 0 1019 1194" preserveAspectRatio="none"><defs><clipPath id="av"><circle cx="738" cy="590" r="445"/></clipPath></defs><g clip-path="url(#av)"><rect x="0" y="0" width="1200" height="1200" fill="#a9c3cf"/><ellipse cx="740" cy="1010" rx="230" ry="110" fill="#6f98b5"/><path d="M670,950 Q740,985 810,950 L800,920 L680,920 Z" fill="#fff"/><rect x="680" y="820" width="120" height="130" fill="#e3a58a"/><ellipse cx="530" cy="640" rx="35" ry="55" fill="#f0b898"/><ellipse cx="945" cy="640" rx="35" ry="55" fill="#f0b898"/><path d="M555,420 Q555,330 740,330 Q920,330 920,420 L920,690 Q900,800 740,870 Q580,800 555,690 Z" fill="#f7c8a5"/><path d="M525,580 Q510,235 745,235 Q975,235 965,580 L925,580 Q920,370 880,350 Q740,330 600,350 Q560,370 560,580 Z" fill="#5a3a30"/><circle cx="640" cy="585" r="20" fill="#3a2a25"/><circle cx="840" cy="585" r="20" fill="#3a2a25"/><path d="M590,505 Q640,480 690,510" fill="none" stroke="#5a3a30" stroke-width="18"/><path d="M790,510 Q840,480 890,505" fill="none" stroke="#5a3a30" stroke-width="18"/><path d="M690,755 Q740,770 790,755" fill="none" stroke="#e09a80" stroke-width="22"/></g></svg></body></html>
